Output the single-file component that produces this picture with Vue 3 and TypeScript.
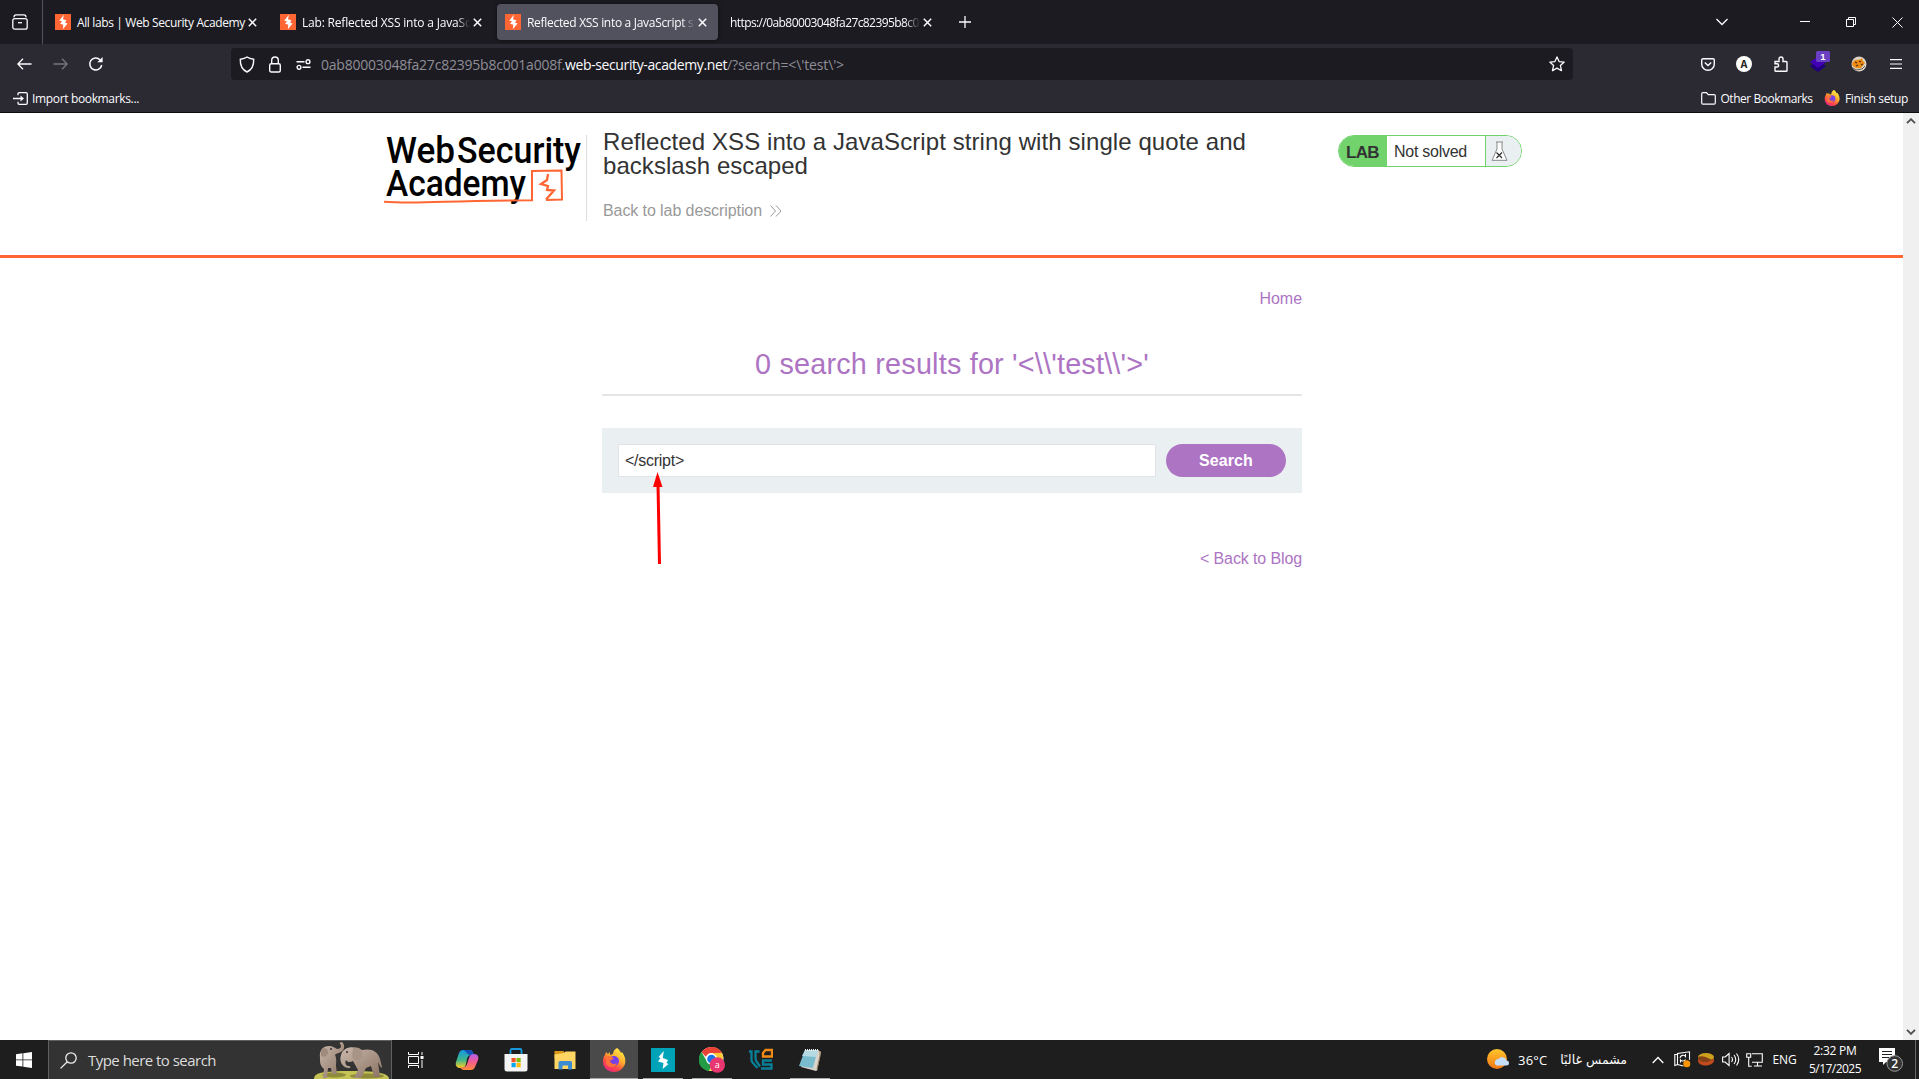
<script setup lang="ts">
interface Tab { title: string; width: number; active?: boolean; icon: boolean }

const tabs: Tab[] = [
  { title: 'All labs | Web Security Academy', width: 168, icon: true },
  { title: 'Lab: Reflected XSS into a JavaScri', width: 176, icon: true },
  { title: 'Reflected XSS into a JavaScript str', width: 175, active: true, icon: true },
  { title: 'https://0ab80003048fa27c82395b8c00', width: 195, icon: false },
]

/* Tracks a label so that it occupies the given advance width. */
const vTrack = {
  mounted(el: HTMLElement, binding: { value: number }) {
    const count = (el.textContent || '').length
    const natural = el.getBoundingClientRect().width
    el.style.letterSpacing = `${(binding.value - natural) / count}px`
  },
}
</script>

<template>
  <div class="screen">
    <header class="tabbar">
      <div class="recent">
        <svg width="16" height="16" viewBox="0 0 16 16" fill="none" stroke="#fbfbfe" stroke-width="1.3"><path d="M2 3.2C2 1.500 3 .8 4 .8h8c1 0 2 .7 2 2.400"/><rect x=".8" y="4.600" width="14.400" height="10.600" rx="2"/><path d="M6 8.700h4"/></svg>
      </div>
      <div v-for="(t, i) in tabs" :key="i" class="tab" :class="{ active: t.active }">
        <svg v-if="t.icon" class="fav" width="16" height="16" viewBox="0 0 16 16"><path fill="#ff6633" d="M0 0h16v16H0z"/><path fill="#fff" d="M8.900.8 8 5.200l3.300 1-1.100 2.600 2.400.6L7.800 15.200l.5-4.500-3.200-.9L7 7.300 4.200 6.700z"/></svg>
        <div class="tab-title"><span v-track="t.width">{{ t.title }}</span></div>
        <svg class="close" width="9" height="9" viewBox="0 0 9 9" stroke="#fbfbfe" stroke-width="1.500"><path d="M.8.800l7.400 7.400M8.200.800.8 8.200"/></svg>
      </div>
      <svg class="plus" width="12" height="12" viewBox="0 0 12 12" stroke="#fbfbfe" stroke-width="1.300"><path d="M6 0v12M0 6h12"/></svg>
      <div class="window-controls">
        <svg width="12" height="8" viewBox="0 0 12 8" fill="none" stroke="#fbfbfe" stroke-width="1.300"><path d="M.5 1 6 6.500 11.500 1"/></svg>
        <svg class="min" width="10" height="10" viewBox="0 0 10 10" stroke="#fff"><path d="M0 4.500h10"/></svg>
        <svg class="max" width="10" height="10" viewBox="0 0 10 10" fill="none" stroke="#fff"><path d="M.5 2.500h7v7h-7zM2.500 2.500v-2h7v7h-2"/></svg>
        <svg width="11" height="11" viewBox="0 0 11 11" stroke="#fff"><path d="M.5.500l10 10M10.500.500l-10 10"/></svg>
      </div>
    </header>

    <div class="toolbar">
      <div class="nav">
        <svg width="15" height="12" viewBox="0 0 15 12" fill="none" stroke="#fbfbfe" stroke-width="1.400"><path d="M6 .8.900 6 6 11.200M1 6h13.500"/></svg>
        <svg width="15" height="12" viewBox="0 0 15 12" fill="none" stroke="#76757d" stroke-width="1.400"><path d="M9 .8 14.100 6 9 11.200M14 6H.5"/></svg>
        <svg width="16" height="16" viewBox="0 0 16 16" fill="none" stroke="#fbfbfe" stroke-width="1.500"><path d="M13.700 9A6 6 0 1 1 12 3.700L13.800 5.500"/><path d="M14.600 1v5.300H9.300z" fill="#fbfbfe" stroke="none"/></svg>
      </div>
      <div class="urlbar">
        <svg width="16" height="17" viewBox="0 0 16 17" fill="none" stroke="#fbfbfe" stroke-width="1.400"><path d="M8 1c2 1.500 4.300 2 6.700 2.300C14.900 8.500 13.500 13.500 8 16 2.500 13.500 1.100 8.500 1.300 3.300 3.700 3 6 2.500 8 1z"/></svg>
        <svg class="lock" width="12" height="17" viewBox="0 0 12 17" fill="none" stroke="#fbfbfe" stroke-width="1.400"><rect x=".7" y="7.700" width="10.600" height="8.300" rx="1.500"/><path d="M2.700 7.500V4.300a3.300 3.300 0 0 1 6.600 0v3.200"/></svg>
        <svg class="perm" width="15" height="11" viewBox="0 0 15 11" fill="none" stroke="#fbfbfe" stroke-width="1.400"><path d="M.5 2.700h8M6.500 8.300h8"/><circle cx="12" cy="2.700" r="1.900"/><circle cx="3" cy="8.300" r="1.900"/></svg>
        <div class="url"><span v-track="244">0ab80003048fa27c82395b8c001a008f.</span><b v-track="162">web-security-academy.net</b><span v-track="117">/?search=&lt;\'test\'&gt;</span></div>
        <svg class="star" width="16" height="16" viewBox="0 0 16 16" fill="none" stroke="#fbfbfe" stroke-width="1.300" stroke-linejoin="round"><path d="m8 .9 2.100 4.700 5.100.5-3.800 3.500 1.100 5.100L8 12.100l-4.500 2.600 1.100-5.100L.8 6.100l5.100-.5z"/></svg>
      </div>
      <div class="extensions">
        <svg width="14" height="13" viewBox="0 0 14 13" fill="none" stroke="#fbfbfe" stroke-width="1.400"><path d="M2 .8h10q1.300 0 1.300 1.300V6A6.300 6.300 0 0 1 .7 6V2.100Q.7.800 2 .8z"/><path d="m3.800 4.500 3.200 3 3.200-3"/></svg>
        <div class="account">A</div>
        <svg width="14" height="16" viewBox="0 0 14 16" fill="none" stroke="#fbfbfe" stroke-width="1.400"><path d="M1 5.500h4V3a2 2 0 0 1 4 0v2.500h3.200q.8 0 .8.800v8.200q0 .8-.8.800H1.800q-.8 0-.8-.8V11h2a1.500 1.500 0 0 0 0-3.200H1z"/></svg>
        <svg class="layers" width="20" height="22" viewBox="0 0 20 22"><path d="m0 15 8-5.500 8 5.500-8 6z" fill="#20007b"/><path d="M0 11 8 5.500 16 11l-8 6z" fill="#4200b5"/><rect x="6" y="0" width="14" height="11" rx="1.500" fill="#6b3fc4"/><text x="13" y="9" fill="#fff" text-anchor="middle" font-family="Liberation Sans, sans-serif" font-weight="700" font-size="9.500">1</text></svg>
        <svg width="16" height="16" viewBox="0 0 16 16"><circle cx="8" cy="8" r="7.500" fill="#d9d4c7"/><path d="M1 8c1-4 4-5 7-4l3-2 1 3 2 2-4 5c-4 1-8 0-9-4z" fill="#ed8b13"/><path d="m4 6 2 1M8 5l2 1M5 10l2-1M10 9l2-1" stroke="#4b3018" stroke-width="1.200"/><path d="m2 12 3 2 6-1 3-3" stroke="#6b6252" fill="none"/></svg>
        <svg width="12" height="10" viewBox="0 0 12 10" stroke="#fbfbfe" stroke-width="1.200"><path d="M0 .7h12M0 5h12M0 9.300h12"/></svg>
      </div>
    </div>

    <div class="bookmarks">
      <svg width="15" height="13" viewBox="0 0 15 13" fill="none" stroke="#fbfbfe" stroke-width="1.300"><path d="M5 3.300V2q0-1.300 1.300-1.300H13q1.300 0 1.300 1.300v9q0 1.300-1.300 1.300H6.300Q5 12.300 5 11V9.700M0 6.500h9.500"/><path d="M7.500 3.500 11 6.500l-3.500 3z" fill="#fbfbfe" stroke="none"/></svg>
      <span v-track="107">Import bookmarks...</span>
      <div class="bookmarks-right">
        <svg width="15" height="13" viewBox="0 0 15 13" fill="none" stroke="#fbfbfe" stroke-width="1.200"><path d="M.7 11V1.900Q.7.700 1.900.700h3.600l1.700 2h6q1.100 0 1.100 1.100V11q0 1.200-1.200 1.200H1.900Q.7 12.200.7 11z"/></svg>
        <span class="other" v-track="92">Other Bookmarks</span>
        <svg width="16" height="16" viewBox="0 0 24 24"><use href="#firefox"/></svg>
        <span class="finish" v-track="63">Finish setup</span>
      </div>
    </div>

    <div class="viewport">
      <main class="page">
        <section class="lab-header">
          <svg class="logo" width="201" height="72" viewBox="0 0 201 72">
            <g fill="#000" font-family="Roboto, sans-serif" font-weight="500" font-size="37">
              <text x="3" y="28.200" textLength="69" lengthAdjust="spacingAndGlyphs">Web</text>
              <text x="74" y="28.200" textLength="124" lengthAdjust="spacingAndGlyphs">Security</text>
              <text x="3" y="60.500" textLength="140" lengthAdjust="spacingAndGlyphs">Academy</text>
            </g>
            <path d="M1 66.800q20 1.500 60 0t88-1.500V36l29.500-.5.500 29-16 .5" fill="none" stroke="#ff6633" stroke-width="2"/>
            <path d="m165 39-1 6-6 4 7 2-1 4 7 .5-8 9" fill="none" stroke="#ff6633" stroke-width="2.300"/>
          </svg>
          <div class="title-block">
            <h2><span v-track="643">Reflected XSS into a JavaScript string with single quote and</span><br><span v-track="205">backslash escaped</span></h2>
            <a class="back"><span v-track="159">Back to lab description</span><svg width="12" height="12" viewBox="0 0 12 12" fill="none" stroke="#999"><path d="m.5.500 5 5.500-5 5.500M6 .5l5 5.500-5 5.500"/></svg></a>
          </div>
          <div class="status">
            <strong><span v-track="33">LAB</span></strong>
            <p><span v-track="73">Not solved</span></p>
            <div class="flask"><svg width="17" height="20" viewBox="0 0 17 20" fill="#fff" stroke="#888"><path d="M5 1h7M6 1v7L1 19.300h15L11 8V1"/><path d="m5.500 11.500 5.500 5.500M11 11.500 5.500 17" stroke="#333" stroke-width="1.300"/></svg></div>
          </div>
        </section>
        <section class="content">
          <a class="home"><span v-track="42.500">Home</span></a>
          <h1><span v-track="394">0 search results for '&lt;\\'test\\'&gt;'</span></h1>
          <form class="search" @submit.prevent>
            <div class="field"><span v-track="59">&lt;/script&gt;</span></div>
            <button type="button"><span v-track="54">Search</span></button>
          </form>
          <a class="blog"><span v-track="102">&lt; Back to Blog</span></a>
        </section>
        <svg class="arrow" width="14" height="94" viewBox="0 0 14 94"><path d="m6 12 1.500 80" stroke="#f00" stroke-width="3"/><path d="M5.500 0 10.500 15H1z" fill="#f00"/></svg>
      </main>
      <div class="scrollbar">
        <svg width="10" height="6" viewBox="0 0 10 6" fill="none" stroke="#505050" stroke-width="1.900"><path d="m1 5.200 4-4 4 4"/></svg>
        <svg width="10" height="6" viewBox="0 0 10 6" fill="none" stroke="#505050" stroke-width="1.900"><path d="m1 .8 4 4 4-4"/></svg>
      </div>
    </div>

    <footer class="taskbar">
      <div class="start"><svg width="16" height="16" viewBox="0 0 16 16" fill="#fff"><path d="M0 2.200 6.500 1.300v6.200H0zM7.300 1.200 16 0v7.500H7.300zM0 8.300h6.500v6.300L0 13.700zM7.300 8.300H16V16l-8.700-1.200z"/></svg></div>
      <div class="searchbox">
        <svg width="17" height="17" viewBox="0 0 17 17" fill="none" stroke="#eee" stroke-width="1.300"><circle cx="11" cy="6" r="5.200"/><path d="M7.300 9.700.6 16.400"/></svg>
        <span v-track="128">Type here to search</span>
        <svg class="elephants" width="75" height="38" viewBox="0 0 75 38">
          <defs><linearGradient id="hide" x1="0" y1="0" x2="1" y2="1"><stop offset="0" stop-color="#cbb9ac"/><stop offset="1" stop-color="#8a7263"/></linearGradient></defs>
          <path d="M0 38c0-6 7-8 37-8s38 3 38 8z" fill="#c5c354"/>
          <ellipse cx="20" cy="34" rx="12" ry="2.500" fill="#8e8b3a"/><ellipse cx="53" cy="35" rx="17" ry="2.500" fill="#8e8b3a"/>
          <path d="M6 17C5 9 9 5 15 5c4 0 6 2 8 3 4 0 5-3 3-5-1-1 0-2 2-2 3 2 3 8-1 10-3 2-5 1-6 3 2 4 1 8 1 11l1 8h-5l-1-6-3 0-1 10H9l1-9c-4-3-4-7-4-11z" fill="url(#hide)"/>
          <path d="M7 9c3-3 7-2 7 2 0 4-4 6-7 4z" fill="#a08b7e"/>
          <path d="M27 14c2-7 9-9 16-7l5 2c9-2 16 1 18 9l2 8-1 1-3-6 2 15h-6l-3-11-5 2-5 10h-7l4-8-5-9c-3 2-6 1-7-1-1 2-1 5 2 6 3 0 4 2 0 2-6-1-9-7-7-13z" fill="url(#hide)"/>
          <path d="M39 7c7-2 10 2 9 10-4 4-9 3-10-2z" fill="#a99588"/><circle cx="17" cy="8" r="1" fill="#372d3b"/><circle cx="33" cy="11" r="1" fill="#372d3b"/>
        </svg>
      </div>
      <div class="apps">
        <div class="app"><svg class="taskview" width="16" height="16" viewBox="0 0 16 16" fill="none" stroke="#fff"><path d="M.5 0v2.500h10V0M.5 16v-2.500h10V16M.5 4.500h10v7H.5zM14 0v3M14 8v8"/><path d="M12.500 4h3v3h-3z" fill="#fff" stroke="none"/></svg></div>
        <div class="app"><svg width="24" height="24" viewBox="0 0 24 24"><defs><linearGradient id="cpa" x2="0" y2="1"><stop stop-color="#1597e5"/><stop offset=".55" stop-color="#3eb68b"/><stop offset="1" stop-color="#ffcf21"/></linearGradient><linearGradient id="cpb" x2="0" y2="1"><stop stop-color="#b15ff0"/><stop offset=".5" stop-color="#f45b8f"/><stop offset="1" stop-color="#ff8b3c"/></linearGradient></defs><path d="M8 2h7c2 0 3 2 4 5h-3c-2 0-3 1-4 4l-1 5c-1 3-2 4-5 4-4 0-6-2-5-6L4 5c1-2 2-3 4-3z" fill="url(#cpa)"/><path d="M8 2h7c2 0 3 2 4 5h-3c-3 0-4-2-5-3-1-1-2-2-3-2z" fill="#1450b8"/><path d="M16 22H9c-2 0-3-1-4-3 4 1 6 0 7-3l2-6c1-3 2-4 5-4 4 0 5 3 4 6l-3 7c-1 2-2 3-4 3z" fill="url(#cpb)"/></svg></div>
        <div class="app"><svg width="24" height="24" viewBox="0 0 24 24"><path d="M6.500 7V2.500q0-1.500 1.500-1.500h8q1.500 0 1.500 1.500V7" fill="none" stroke="#1799db" stroke-width="1.800"/><path d="M.5 6h23v15q0 2.500-2.500 2.500H3Q.5 23.500.5 21z" fill="#f4f4f4"/><path fill="#f35325" d="M7.500 10h4.200v4.200H7.500z"/><path fill="#81bc06" d="M12.500 10h4.200v4.200h-4.200z"/><path fill="#05a6f0" d="M7.500 15h4.200v4.200H7.500z"/><path fill="#ffba08" d="M12.500 15h4.200v4.200h-4.200z"/></svg></div>
        <div class="app"><svg width="24" height="24" viewBox="0 0 24 24"><path fill="#d99a17" d="M1.500 3h9l2 3v4h-11z"/><path fill="#ffd664" d="M1.500 6.500 11 5l1.500-1.500h10V21h-21z"/><path fill="#3b8cd1" d="M5.500 21.500v-7q0-1.500 1.500-1.500h10.500q1.500 0 1.500 1.500v7h-4v-4H9.500v4z"/></svg></div>
        <div class="app current"><svg width="24" height="24" viewBox="0 0 24 24">
          <defs><linearGradient id="fxa" x1=".8" x2=".2" y1="0" y2="1"><stop stop-color="#fff14b"/><stop offset=".4" stop-color="#ffb02d"/><stop offset=".7" stop-color="#ff4b45"/><stop offset="1" stop-color="#e62286"/></linearGradient></defs>
          <g id="firefox"><path d="M15 0c2 1 3 3 4 5l1-1c3 4 4 8 3 12-2 5-6 8-11 8C6 24 1 20 1 13c0-3 1-5 2-6l1-3 2 2 2-2v3l3-1c0-3 2-5 4-6z" fill="url(#fxa)"/><circle cx="12" cy="13" r="5" fill="#7542e5"/><path d="M4 9c3-2 5-1 8 2-2 0-3 1-4 2 1 3 4 4 7 2-1 4-8 6-11 1z" fill="#ff7139"/></g>
        </svg></div>
        <div class="app run"><svg width="24" height="24" viewBox="0 0 24 24"><path fill="#00a3b8" d="M0 0h24v24H0z"/><path fill="#fff" d="m12.800 3-1 7 5.200 2-1.500 3 2 1-5.800 5 .8-6-5.500-1.500 2.500-3.500-2-1z"/></svg></div>
        <div class="app run"><svg width="26" height="26" viewBox="0 0 26 26"><circle cx="12.500" cy="12" r="12" fill="#fff"/><path d="M12.500 0c5 0 8 2 10.500 6H12.500c-3 0-5 2-5.500 4L2.500 5C5 2 8 0 12.500 0z" fill="#ea4335"/><path d="M2.500 5 8 14.500c1 2 3 3 5 3L10 24C-2 22-2 10 2.500 5z" fill="#249c46"/><path d="M23 6c2 5 1 10-2 14-3 3-6 4-11 4l5.500-9c1-3 0-7-2-9z" fill="#fcc934"/><circle cx="12.500" cy="12" r="5.500" fill="#fff"/><circle cx="12.500" cy="12" r="4.300" fill="#1a73e8"/><circle cx="18.300" cy="18" r="7.700" fill="#e83770"/><text x="18.300" y="21" fill="#fff" text-anchor="middle" font-size="9" font-family="Open Sans, sans-serif">a</text></svg></div>
        <div class="app"><svg width="24" height="24" viewBox="0 0 24 24" fill="none" stroke="#087f98" stroke-width="2.300"><path d="M0 3.500h2.500V12q0 1.500 1.500 3l4.500 5M10.500 3.500H6.500V10q0 2 1 3.500l3.500 5M23 12.500h-9v4h8.500v4H12"/><path d="M14 8.500V5l2.500-3H23v6.500z" stroke="#f28a18"/></svg></div>
        <div class="app run"><svg width="24" height="24" viewBox="0 0 24 24"><path d="M9 2 22 4l-4 19-15-4z" fill="#d6d3ca"/><path d="M7 2h13l-5 18-14-2z" fill="#79bccd"/><path d="M7 2h13l-2 7-14-1z" fill="#b6dae2"/><path d="M20 2l3 2-4 19-4-3z" fill="#d9d5cc"/><path d="M22 3v5l-3 13" stroke="#987953" fill="none"/><path d="M7 2h13" stroke="#eee" stroke-width="2" stroke-dasharray="1 1"/></svg></div>
      </div>
      <div class="tray">
        <svg class="weather" width="23" height="22" viewBox="0 0 23 22"><defs><linearGradient id="sun" x2="0" y2="1"><stop stop-color="#ffc62d"/><stop offset="1" stop-color="#f37614"/></linearGradient></defs><circle cx="10" cy="10" r="10" fill="url(#sun)"/><path d="M9.500 16.500a3.500 3.500 0 0 1 2-6.500 4.500 4.500 0 0 1 8 1.500 2.500 2.500 0 0 1 0 5z" fill="#c3ddfa"/></svg>
        <span class="temp"><i v-track="29.500">36°C</i></span>
        <span class="arabic" dir="rtl">مشمس غالبًا</span>
        <svg class="up" width="12" height="8" viewBox="0 0 12 8" fill="none" stroke="#fff" stroke-width="1.300"><path d="m.7 7 5.300-5.500L11.300 7"/></svg>
        <svg class="sync" width="17" height="17" viewBox="0 0 17 17" fill="none" stroke="#fff" stroke-width="1.100"><path d="M3.500 13.500V2.500L15.500.8v8M3.500 13.500l6 1.500M3.500 3.500H.8v11l3-1"/><path d="M6 7c.5-3 4-3.500 5.500-1.500V3M11.500 8.500c-1 2-4 2-5 .5v2.500"/><circle cx="12.800" cy="12.800" r="3.500" fill="#ff9500" stroke="none"/></svg>
        <svg class="pill" width="17" height="13" viewBox="0 0 17 13"><path d="M0 5c1 4 12 5 16 0v3c-2 6-15 6-16 0z" fill="#c34b1e"/><ellipse cx="8" cy="4" rx="8" ry="4" fill="#cda11d"/><path d="M0 4c4-2 8 0 14 3-6 3-14 2-14-2z" fill="#834317"/></svg>
        <svg class="sound" width="18" height="15" viewBox="0 0 18 15" fill="none" stroke="#fff" stroke-width="1.100"><path d="M.6 5h2.500l4-3.500v12L3.100 10H.6zM9.500 5q2 2.500 0 5M12 3q3.500 4.500 0 9M14.500 1.500q4.500 6 0 12"/></svg>
        <svg class="net" width="17" height="14" viewBox="0 0 17 14" fill="none" stroke="#fff" stroke-width="1.100"><path d="M6 .8h10.300v8.500H6M8 13h8M11.500 9.500V13M.7.700h4v3.500h-4zM2.700 4.500v8.800h3"/></svg>
        <span class="lang"><i v-track="24">ENG</i></span>
        <div class="clock"><div><span v-track="43">2:32 PM</span></div><div><span v-track="52">5/17/2025</span></div></div>
        <svg class="notice" width="25" height="25" viewBox="0 0 25 25"><path d="M0 0h16v14H7l-3 3v-3H0z" fill="#fff"/><path d="M3 3.500h10M3 6.500h10M3 9.500h7" stroke="#222"/><circle cx="15.700" cy="15.500" r="7.800" fill="#333" stroke="#999"/><text x="15.700" y="19.700" fill="#fff" font-size="12" text-anchor="middle" font-weight="600" font-family="Open Sans, sans-serif">2</text></svg>
      </div>
    </footer>
  </div>
</template>

<style>
body { margin: 0; overflow: hidden; }
</style>

<style scoped>
.screen { width: 1919px; height: 1079px; display: flex; flex-direction: column; overflow: hidden; background: #fff; font-family: "Open Sans", "Noto Sans", sans-serif; font-size: 12px; white-space: nowrap; color: #fbfbfe; }
svg { display: block; flex: none; }
i { font-style: normal; }
.tabbar { height: 44px; flex: none; display: flex; align-items: center; background: #1c1b22; }
.recent { width: 43px; height: 44px; box-sizing: border-box; padding-left: 12px; display: flex; align-items: center; border-right: 1px solid #55545c; margin-right: 4px; }
.tab { width: 221px; height: 36px; margin: 0 2px; box-sizing: border-box; padding-left: 8px; display: flex; align-items: center; border-radius: 4px; }
.tab:nth-child(2) { margin-left: 0; }
.tab.active { background: #52525e; box-shadow: 0 0 4px #0008; }
.fav { margin-right: 6px; }
.tab-title { width: 168px; flex: none; overflow: hidden; -webkit-mask-image: linear-gradient(to right, #000 92%, transparent); mask-image: linear-gradient(to right, #000 92%, transparent); }
.tab:nth-child(2) .tab-title { -webkit-mask-image: none; mask-image: none; overflow: visible; }
.tab:nth-child(5) { padding-left: 8px; }
.tab:nth-child(5) .tab-title { width: 190px; }
.close { margin-left: 2.5px; }
.plus { margin-left: 14px; }
.window-controls { margin-left: auto; margin-right: 16px; display: flex; align-items: center; }
.min { margin-left: 72px; }
.max { margin: 0 36px; }
.toolbar { height: 40px; flex: none; display: flex; align-items: center; background: #2b2a33; }
.nav { width: 231px; box-sizing: border-box; padding-left: 17px; display: flex; align-items: center; gap: 20.5px; }
.urlbar { width: 1342px; height: 32px; box-sizing: border-box; padding: 0 8px; display: flex; align-items: center; border-radius: 4px; background: #1c1b22; }
.lock { margin-left: 14px; }
.perm { margin: 0 10px 0 15px; }
.url { font-size: 14px; color: #8f8e96; display: flex; white-space: pre; }
.url b { font-weight: 400; color: #fbfbfe; }
.star { margin-left: auto; }
.extensions { margin-left: auto; margin-right: 17px; display: flex; align-items: center; }
.account { width: 16px; height: 16px; margin: 0 22px 0 21px; border-radius: 50%; background: #fff; color: #222; font-size: 10px; font-weight: 700; line-height: 16px; text-align: center; }
.layers { margin: -5px 21px 0 22px; }
.extensions svg:last-child { margin-left: 23px; }
.bookmarks { height: 28px; flex: none; box-sizing: border-box; padding: 0 11px 0 13px; display: flex; align-items: center; gap: 4px; background: #2b2a33; }
.bookmarks-right { margin-left: auto; display: flex; align-items: center; gap: 5px; }
.other { margin-right: 6.5px; }
.viewport { height: 928px; flex: none; display: flex; box-sizing: border-box; border-top: 1px solid #0c0c0d; }
.page { width: 1903px; position: relative; font-family: "Liberation Sans", Arial, sans-serif; font-size: 16px; color: #333; }
.lab-header { height: 145px; box-sizing: border-box; border-bottom: 3px solid #ff6633; padding: 22px 0 0 383px; display: flex; align-items: flex-start; }
.title-block { width: 735px; height: 86px; margin-left: 2px; box-sizing: border-box; border-left: 1px solid #dedee2; padding-left: 16px; }
h2 { margin: -5px 0 0; font-size: 24px; font-weight: 400; line-height: 24px; }
.back { display: flex; align-items: center; gap: 8px; margin-top: 23px; line-height: 20px; color: #999; }
.status { width: 184px; height: 32px; margin-left: 17px; box-sizing: border-box; display: flex; border: 1px solid #72d36d; border-radius: 16px; overflow: hidden; line-height: 31px; }
.status strong { width: 48px; padding-left: 7px; box-sizing: border-box; background: #72d36d; font-size: 17px; line-height: 33px; }
.status p { width: 98px; margin: 0; padding-left: 7px; box-sizing: border-box; }
.flask { flex: 1; box-sizing: border-box; padding: 5px 0 0 5px; background: #eaeff2; border-left: 1px solid #72d36d; }
.content { width: 700px; margin-left: 602px; display: flex; flex-direction: column; color: #ad74c3; }
.home { align-self: flex-end; margin-top: 31px; line-height: 20px; }
h1 { height: 56px; margin: 31px 0 0; box-sizing: border-box; border-bottom: 2px solid #e5e5e5; font-size: 28.8px; font-weight: 400; line-height: 49px; text-align: center; }
.search { height: 65px; margin: 32px 0 0; padding: 16px; box-sizing: border-box; display: flex; gap: 10px; background: #eaeff2; }
.field { width: 538px; height: 33px; box-sizing: border-box; padding-left: 6px; border: 1px solid #e0e4e7; background: #fff; line-height: 31px; color: #333; }
button { width: 120px; height: 33px; padding: 0; border: 0; border-radius: 17px; background: #ad74c3; color: #fff; font: 700 16px/33px "Liberation Sans", Arial, sans-serif; }
.blog { align-self: flex-end; margin-top: 56px; line-height: 20px; }
.arrow { position: absolute; left: 652px; top: 359px; }
.scrollbar { width: 16px; box-sizing: border-box; padding: 5px 3px; display: flex; flex-direction: column; justify-content: space-between; background: #f0f0f0; }
.taskbar { height: 39px; flex: none; display: flex; background: #1e1e1e; }
.start { width: 48px; display: flex; align-items: center; justify-content: center; }
.searchbox { width: 344px; box-sizing: border-box; padding-left: 11px; display: flex; align-items: center; gap: 11px; border: 1px solid #606060; border-bottom: 0; background: #333; font-size: 15px; color: #ddd; }
.elephants { margin: 0 2px 0 auto; }
.apps { display: flex; margin-left: 2px; }
.app { width: 48px; height: 39px; margin-right: 1px; box-sizing: border-box; display: flex; align-items: center; justify-content: center; }
.taskview { margin-left: -4px; }
.current { background: linear-gradient(#aaa, #aaa) bottom / 48px 1px no-repeat #4a4a4a; }
.run { background: linear-gradient(#aaa, #aaa) center bottom / 40px 1px no-repeat; }
.tray { margin-left: auto; margin-right: 3px; padding-right: 11px; display: flex; align-items: center; border-right: 1px solid #666; color: #fff; }
.temp { width: 45px; padding-left: 8px; box-sizing: border-box; font-size: 13px; }
.arabic { width: 72px; display: block; font: 12.5px "DejaVu Sans", sans-serif; }
.up { margin: 0 10px 0 25px; }
.sync { margin-right: 7px; }
.pill { margin-right: 7px; }
.sound { margin-right: 6px; }
.net { margin-right: 9.5px; }
.lang { width: 24px; }
.clock { width: 52px; margin: 0 18px 0 12.5px; text-align: center; line-height: 18px; }
.notice { margin-top: 2px; }
</style>
